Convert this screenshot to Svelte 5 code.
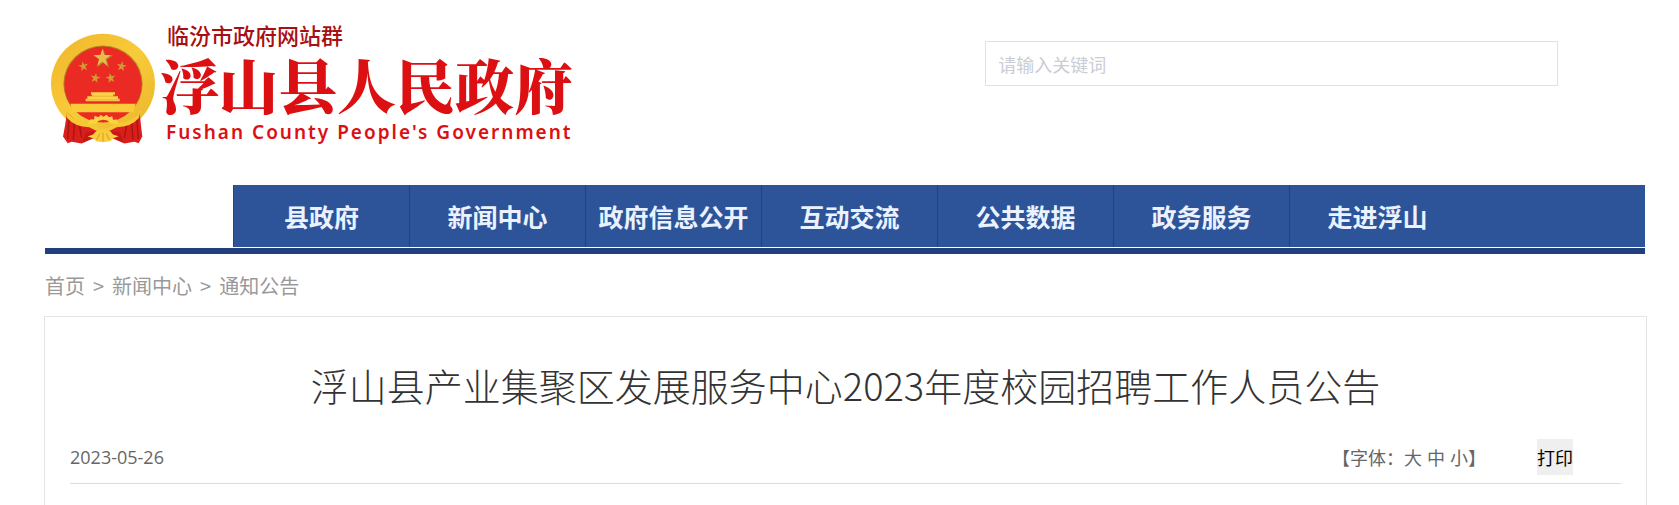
<script lang="ts">
  type FontSize = 'large' | 'medium' | 'small';

  const navItems = ['县政府', '新闻中心', '政府信息公开', '互动交流', '公共数据', '政务服务', '走进浮山'];
  const crumbs = ['首页', '新闻中心', '通知公告'];

  const sizes: { key: FontSize; label: string }[] = [
    { key: 'large', label: '大' },
    { key: 'medium', label: '中' },
    { key: 'small', label: '小' }
  ];

  // small stars: centre x, centre y, rotation
  const smallStars = [
    [131, 151, -10],
    [246, 151, 10],
    [167, 186, 10],
    [213, 186, -10]
  ];

  let keyword = $state('');
  let fontSize = $state<FontSize>('medium');
</script>

<div class="page">
  <header class="header">
    <a class="logo" href="#home">
      <svg class="emblem" viewBox="34 52 312 332" aria-hidden="true">
        <defs>
          <linearGradient id="gold" x1="0" y1="0" x2="1" y2="1">
            <stop offset="0" stop-color="#efb52a" />
            <stop offset="0.5" stop-color="#f8cb3a" />
            <stop offset="1" stop-color="#e9b52a" />
          </linearGradient>
          <path id="star" d="M0-30 7-9 30-9 11 5 18 28 0 14-18 28-11 5-30-9-7-9Z" />
        </defs>
        <ellipse cx="190" cy="204" rx="156" ry="150" fill="url(#gold)" />
        <ellipse cx="190" cy="204" rx="119" ry="115" fill="#b98322" />
        <ellipse cx="190" cy="206" rx="116" ry="114" fill="#ec2a24" />
        <use href="#star" transform="translate(190 127)" fill="#b98a30" />
        <use href="#star" transform="translate(188 125) scale(.85)" fill="#e9bd4c" />
        {#each smallStars as [x, y, angle]}
          <use href="#star" transform="translate({x} {y}) rotate({angle}) scale(.5)" fill="#d29a36" />
        {/each}
        <path d="M154 229h72v7h-5v5h14v8h5v7h-102v-7h5v-8h14v-5h-3Z" fill="#fbd34a" />
        <path d="M151 241h78M142 252h96" stroke="#e3a32b" stroke-width="2" />
        <path d="M92 264h196l-7 25H99Z" fill="#fccb3a" />
        <path d="M82 289 112 318 151 330 178 345 138 366 126 383 96 378 84 382 70 362 76 330Z" fill="#d91f1b" />
        <path d="M300 289 270 318 229 330 202 345 242 366 254 383 284 378 297 382 308 362 304 330Z" fill="#d91f1b" />
        <path d="M88 312 84 370M104 322 101 371M119 327 126 366M292 312 296 370M276 322 280 371M261 327 254 366" fill="none" stroke="#a9120f" stroke-width="4" />
        <path d="M78 282Q101 320 153 323L190 344 229 323Q280 320 303 282L298 306Q275 334 231 334L190 355 149 334Q105 334 82 306Z" fill="#f7c832" />
        <path d="M145 325 152 310 163 311 165 300 177 304 183 297 191 303 201 297 208 304 218 301 220 312 232 311 237 325 213 323 203 314 190 312 177 315 168 323Z" fill="#f9d444" />
        <path d="M126 383 139 350 171 345 190 353 210 345 241 350 254 383 220 368 190 378 160 368Z" fill="#c51816" />
        <path d="M144 362 160 356 169 346 190 340 212 346 220 356 237 361 221 367 211 376 190 379 170 376 160 367Z" fill="#f8ce3e" />
        <path d="M171 372 180 353M190 376V350M209 372 200 353" stroke="#d99a25" stroke-width="3" />
      </svg>
      <span class="logo-text">
        <span class="logo-group">临汾市政府网站群</span>
        <span class="logo-name">浮山县人民政府</span>
        <span class="logo-en">Fushan County People's Government</span>
      </span>
    </a>
    <input class="search" type="text" placeholder="请输入关键词" aria-label="请输入关键词" bind:value={keyword} />
  </header>

  <div class="nav-wrap">
    <nav class="nav">
      {#each navItems as item}
        <a class="nav-item" href="#nav">{item}</a>
      {/each}
    </nav>
  </div>

  <nav class="crumbs">
    {#each crumbs as crumb, i}
      {#if i > 0}<span>&gt;</span>{/if}
      <a href="#crumb">{crumb}</a>
    {/each}
  </nav>

  <main class="article">
    <h1>浮山县产业集聚区发展服务中心2023年度校园招聘工作人员公告</h1>
    <div class="meta">
      <time datetime="2023-05-26">2023-05-26</time>
      <div class="tools">
        <div class="sizes">
          <span>【字体：</span>
          {#each sizes as size}
            <button type="button" aria-pressed={fontSize === size.key} onclick={() => (fontSize = size.key)}>{size.label}</button>
          {/each}
          <span>】</span>
        </div>
        <button class="print" type="button" onclick={() => window.print()}>打印</button>
      </div>
    </div>
  </main>
</div>

<style>
  :global(body) {
    background: #fff;
  }

  .page {
    box-sizing: border-box;
    min-height: 100vh;
    display: flex;
    flex-direction: column;
    padding: 0 33px 0 45px;
    font-family: 'Noto Sans CJK SC', sans-serif;
    font-size: 18px;
    color: #666;
  }

  a {
    color: inherit;
    text-decoration: none;
  }

  .header {
    display: flex;
    justify-content: space-between;
    align-items: flex-start;
    padding: 21px 88px 41px 6px;
  }

  .logo {
    display: flex;
    align-items: flex-end;
    gap: 5px;
  }

  .emblem {
    width: 104px;
    height: 111px;
  }

  .logo-text {
    display: flex;
    flex-direction: column;
    color: #dc1012;
    white-space: nowrap;
  }

  .logo-group {
    padding-left: 7px;
    font-size: 22px;
    line-height: 26px;
    font-weight: 500;
    color: #a80f12;
  }

  .logo-name {
    font-family: 'Noto Serif CJK SC', 'Noto Sans CJK SC', serif;
    font-size: 59px;
    line-height: 74px;
    font-weight: 900;
  }

  .logo-en {
    padding-left: 6px;
    font-family: 'Noto Sans', 'Open Sans', sans-serif;
    font-size: 19px;
    line-height: 23px;
    font-weight: 600;
    letter-spacing: 2px;
  }

  .search {
    box-sizing: border-box;
    width: 38%;
    height: 45px;
    margin-top: 20px;
    padding: 0 12px;
    border: 1px solid #e2e2e2;
    background: #fff;
    font: inherit;
    color: #333;
    outline: none;
  }

  .search::placeholder {
    color: #c8cdd6;
    opacity: 1;
  }

  .nav-wrap {
    margin-right: 1px;
    padding-bottom: 1px;
    border-bottom: 6px solid #203f7c;
  }

  .nav {
    display: flex;
    margin-left: 188px;
    background: #2d5499;
  }

  .nav-item {
    box-sizing: border-box;
    width: 176px;
    border-left: 1px solid #20437f;
    font-size: 25px;
    line-height: 62px;
    font-weight: 700;
    text-align: center;
    white-space: nowrap;
    color: #eaf1ff;
  }

  .crumbs {
    display: flex;
    gap: 8px;
    padding: 17px 0 15px;
    font-size: 20px;
    line-height: 30px;
    color: #999;
  }

  .article {
    flex: 1;
    margin: 0 -1px;
    padding: 38px 25px 0;
    border: 1px solid #e4e4e4;
    border-bottom: 0;
  }

  h1 {
    margin: 0 0 24px;
    font-size: 38px;
    line-height: 60px;
    font-weight: 300;
    text-align: center;
    color: #333;
  }

  .meta {
    display: flex;
    justify-content: space-between;
    align-items: center;
    padding-bottom: 8px;
    border-bottom: 1px solid #dcdcdc;
  }

  time {
    font-family: 'Open Sans', sans-serif;
  }

  .tools {
    display: flex;
    align-items: center;
    gap: 51px;
    padding-right: 48px;
  }

  .sizes {
    display: flex;
  }

  .sizes button {
    padding: 0;
    border: 0;
    background: none;
    font: inherit;
    color: inherit;
    cursor: pointer;
  }

  .sizes button + button {
    margin-left: 5px;
  }

  .print {
    padding: 0;
    border: 0;
    background: #efefef;
    font: inherit;
    line-height: 36px;
    color: #000;
    cursor: pointer;
  }
</style>
